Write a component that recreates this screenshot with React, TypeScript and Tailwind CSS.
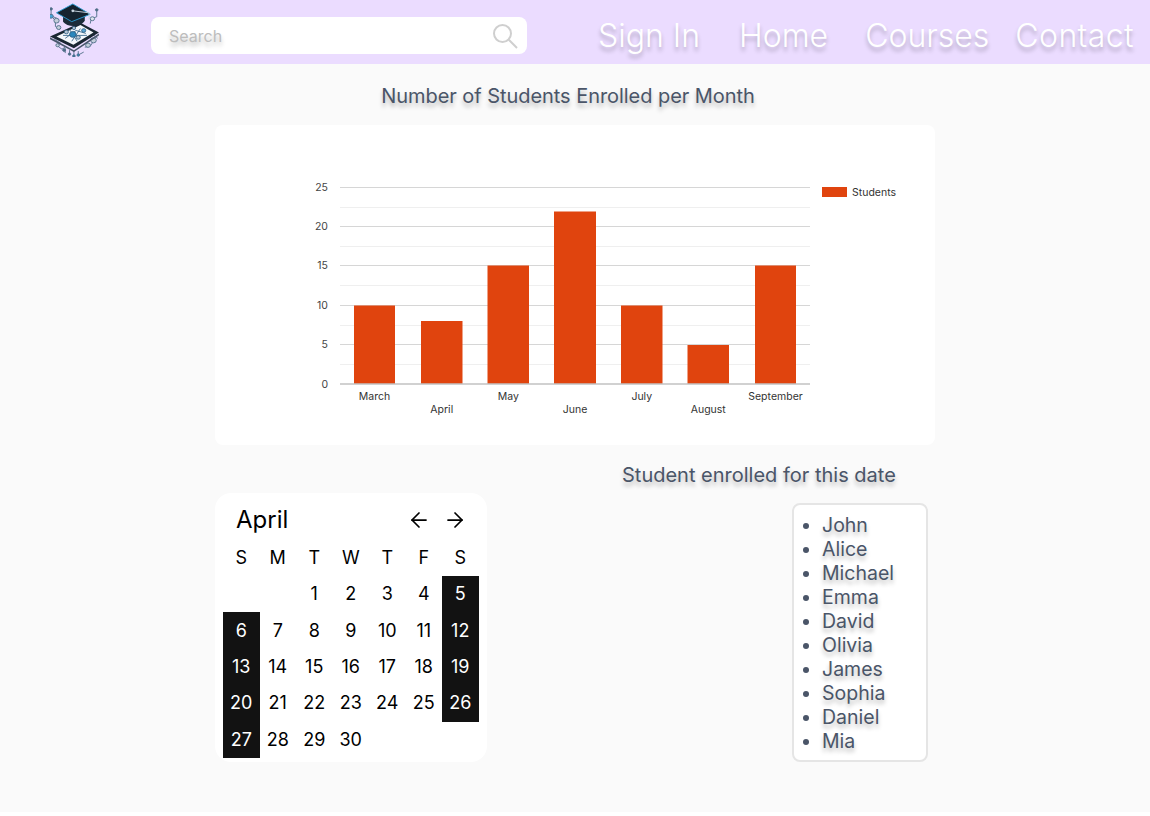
import React from "react";
import { ArrowLeft, ArrowRight } from "lucide-react";

const bars = [
  { m: "March", x: 354, w: 41, top: 305.5, low: false },
  { m: "April", x: 421, w: 41.5, top: 321, low: true },
  { m: "May", x: 487.5, w: 41.5, top: 265.5, low: false },
  { m: "June", x: 554, w: 42, top: 211.5, low: true },
  { m: "July", x: 621, w: 41.5, top: 305.5, low: false },
  { m: "August", x: 687.5, w: 41.5, top: 345, low: true },
  { m: "September", x: 755, w: 41, top: 265.5, low: false },
];
const major = [
  { v: 25, y: 187.5 },
  { v: 20, y: 226.5 },
  { v: 15, y: 265.5 },
  { v: 10, y: 305.5 },
  { v: 5, y: 344.5 },
];
const minor = [207.5, 246.5, 285.5, 325.5, 364.5];
const names = ["John", "Alice", "Michael", "Emma", "David", "Olivia", "James", "Sophia", "Daniel", "Mia"];
const heads = ["S", "M", "T", "W", "T", "F", "S"];
const days: (number | null)[] = [null, null, 1, 2, 3, 4, 5];
for (let d = 6; d <= 30; d++) days.push(d);
const dark = new Set([5, 6, 12, 13, 19, 20, 26, 27]);

function Logo() {
  return (
    <svg width="50" height="54" viewBox="48 2 46 55" preserveAspectRatio="none" fill="none" className="block">
      <g stroke="#54728c" strokeWidth="0.9" fill="none">
        <path d="M49 8v7l4 5v6l4 3M49 15l6 3M91 9v7l-5 2-1 5M58 43l-6-4M54 45l5 4 3-2M62 48v5M66 50v4M70 50v6M74 51v4l5-3M80 47l5-1 3-5M88 40l-4-4M86 33l6 5" />
        <circle cx="49" cy="8" r="1.2" fill="#4b6a85" />
        <circle cx="49" cy="15.5" r="2" fill="#46a3d8" />
        <circle cx="54" cy="20" r="2.4" fill="#c3cedb" />
        <circle cx="56" cy="27" r="2" fill="#c3cedb" />
        <circle cx="91" cy="9" r="1.2" fill="#4b6a85" />
        <circle cx="87" cy="18" r="2" fill="#dfe6ee" />
        <circle cx="88" cy="40" r="2.6" fill="#c3cedb" />
        <circle cx="83" cy="45" r="2.2" fill="#c3cedb" />
        <circle cx="55" cy="45" r="1.6" fill="#c3cedb" />
        <circle cx="61" cy="50" r="1.3" fill="#4b6a85" />
        <circle cx="66" cy="54" r="1.2" fill="#4b6a85" />
        <circle cx="70" cy="56" r="1.2" fill="#2b6f9c" />
        <circle cx="74" cy="55" r="1.2" fill="#2b87bd" />
      </g>
      <path d="M48 36 L76 22 L93 32 L70 48 Z" fill="#1a2632" />
      <path d="M48 37 L70 50 L93 33 L93 35 L70 52 L48 39 Z" fill="#47566a" />
      <path d="M54 36 L76 24.5 L88 32 L69.5 44.5 Z" fill="#f4f7fb" />
      <g stroke="#2f5f83" strokeWidth="0.8">
        <path d="M60 35h22M66 29l7 12M76 28l-8 13M62 38l10-8 9 3" />
        <circle cx="69" cy="34" r="3" fill="#2b87bd" />
        <circle cx="63" cy="31.5" r="1.9" fill="#b7c5d4" />
        <circle cx="79" cy="30" r="1.9" fill="#5aa6d3" />
        <circle cx="74" cy="37" r="1.9" fill="#b7c5d4" />
        <circle cx="70" cy="27.5" r="1.6" fill="#b7c5d4" />
      </g>
      <path d="M60 14 v7 C64 27 76 27 80 20 V14 Z" fill="#1c2b39" />
      <path d="M54 12 L69 3 L85 13.5 L68 21 Z" fill="#15232f" stroke="#2a9ad0" strokeWidth="0.9" />
      <path d="M69 10 L84 12 V19" stroke="#c6d3de" strokeWidth="0.9" />
      <circle cx="69" cy="10" r="1.3" fill="#c6d3de" />
    </svg>
  );
}

export default function App() {
  return (
    <div className="min-h-[812px] bg-[#fafafa] font-['Inter',sans-serif]">
      <header className="flex h-16 items-center bg-[#ebdcff]">
        <div className="ml-[50px] w-[50px] self-start pt-[3px]">
          <Logo />
        </div>
        <div className="ml-[51px] mt-[7px] flex h-[37px] w-[376px] items-center justify-between rounded-lg bg-white pl-[18px] pr-[8px]">
          <span className="text-base text-[#bdbdbd] [text-shadow:0_4px_4px_rgba(0,0,0,0.25)]">Search</span>
          <svg width="28" height="28" viewBox="0 0 28 28" fill="none" stroke="#cfcfcf" strokeWidth="2">
            <circle cx="11.5" cy="11.5" r="8.5" />
            <path d="M17.8 17.8 L26 26" />
          </svg>
        </div>
        <nav className="mt-2 flex text-[32px] font-light leading-10 text-white [text-shadow:0_4px_4px_rgba(0,0,0,0.25)]">
          <a className="ml-[71px]">Sign In</a>
          <a className="ml-[39px]">Home</a>
          <a className="ml-[37px]">Courses</a>
          <a className="ml-[26px] tracking-[0.4px]">Contact</a>
        </nav>
      </header>

      <main className="ml-[215px] w-[720px]">
        <h1 className="mr-[14px] pt-[18px] text-center text-xl leading-7 tracking-[-0.05px] text-[#4a5568] [text-shadow:0_4px_4px_rgba(0,0,0,0.25)]">
          Number of Students Enrolled per Month
        </h1>
        <div className="mt-[15px] h-[320px] overflow-hidden rounded-lg bg-white">
          <svg viewBox="215 125 720 320" width="720" height="320" className="block" fontFamily="Inter, sans-serif" fontSize="10.5">
            {minor.map((y) => (
              <line key={y} x1="340" x2="810" y1={y} y2={y} stroke="#efefef" />
            ))}
            {major.map((t) => (
              <line key={t.v} x1="340" x2="810" y1={t.y} y2={t.y} stroke="#d6d6d6" />
            ))}
            {bars.map((b) => (
              <rect key={b.m} x={b.x} y={b.top} width={b.w} height={383.5 - b.top} fill="#e0440e" />
            ))}
            <line x1="340" x2="810" y1="384" y2="384" stroke="#a3a3a3" strokeWidth="1.2" />
            {[...major, { v: 0, y: 384 }].map((t) => (
              <text key={t.v} x="328" y={t.y + 3.5} textAnchor="end" fill="#444444">
                {t.v}
              </text>
            ))}
            {bars.map((b) => (
              <text key={b.m} x={b.x + b.w / 2} y={b.low ? 413 : 400} textAnchor="middle" fill="#333333">
                {b.m}
              </text>
            ))}
            <rect x="822" y="187" width="25" height="10" fill="#e0440e" />
            <text x="852" y="196" fill="#333333">
              Students
            </text>
          </svg>
        </div>

        <h2 className="ml-[407px] mt-4 whitespace-nowrap text-xl leading-7 text-[#4a5568] [text-shadow:0_4px_4px_rgba(0,0,0,0.25)]">
          Student enrolled for this date
        </h2>

        <div className="flex items-start justify-between pr-[7px]">
          <section className="mt-1 h-[269px] w-[272px] rounded-2xl bg-white pl-2 text-black">
            <div className="flex h-[46.6px] items-center justify-between pl-[13px] pr-5 pt-[7px]">
              <span className="text-2xl leading-8">April</span>
              <div className="flex gap-3">
                <ArrowLeft size={24} strokeWidth={1.75} />
                <ArrowRight size={24} strokeWidth={1.75} />
              </div>
            </div>
            <div className="grid w-[255.5px] grid-cols-7 auto-rows-[36.4px] text-lg">
              {heads.map((h, i) => (
                <div key={i} className="flex items-center justify-center">
                  {h}
                </div>
              ))}
              {days.map((d, i) => (
                <div
                  key={i}
                  className={
                    d !== null && dark.has(d)
                      ? "flex items-center justify-center bg-[#121212] text-white"
                      : "flex items-center justify-center"
                  }
                >
                  {d}
                </div>
              ))}
            </div>
          </section>

          <ul className="mt-3.5 h-[259px] w-[136px] list-disc rounded-lg border-2 border-[#e5e5e5] bg-white pl-7 pt-2 text-[19.5px] leading-6 text-[#4a5568] [text-shadow:0_4px_4px_rgba(0,0,0,0.25)]">
            {names.map((n) => (
              <li key={n}>{n}</li>
            ))}
          </ul>
        </div>
      </main>
    </div>
  );
}
